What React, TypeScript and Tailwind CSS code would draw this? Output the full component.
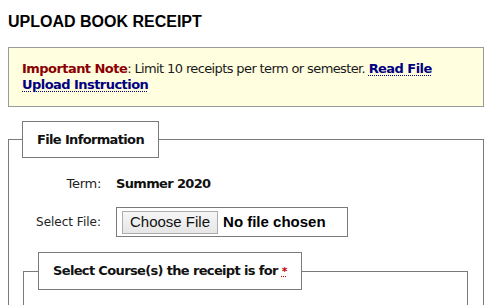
import React from 'react';

const verdana = "font-['DejaVu_Sans',Verdana,sans-serif]";
const arial = "font-['Liberation_Sans',Arial,sans-serif]";

const Legend: React.FC<{ children: React.ReactNode; className?: string }> = ({ children, className }) => (
  <legend
    className={`border border-[#7a7a7a] bg-white px-[14px] py-[10px] text-[13px] leading-[15px] font-bold tracking-[-0.65px] text-[#111] ${verdana} ${className ?? ''}`}
  >
    {children}
  </legend>
);

export default function App() {
  return (
    <div className="min-h-screen bg-white text-[#1a1a1a]">
      <h2 className={`ml-[8px] pt-[13px] text-[16px] leading-[18px] font-bold text-black ${arial}`}>
        UPLOAD BOOK RECEIPT
      </h2>

      {/* note */}
      <div
        className={`mt-[16px] ml-[8px] w-[476px] border border-[#9a9a9a] bg-[#ffffe0] p-[13px] text-[13px] leading-[16px] tracking-[-0.62px] ${verdana}`}
      >
        <span className="font-bold tracking-[-0.55px] text-[#8b0000]">Important Note</span>: Limit 10 receipts per term or semester.{' '}
        <a href="#" className="font-bold tracking-[-0.55px] text-[#000080] underline decoration-dotted decoration-1 underline-offset-2">
          Read File Upload Instruction
        </a>
      </div>

      <fieldset className="mt-[14px] ml-[8px] w-[476px] border border-[#7a7a7a] p-0 pb-[20px]">
        <Legend className="ml-[13px]">File Information</Legend>

        <div className="mt-[18px] grid grid-cols-[92px_1fr] items-center gap-x-[15px] gap-y-[15px]">
          <div className={`text-right text-[13px] leading-[16px] tracking-[-0.3px] text-[#222] ${verdana}`}>Term:</div>
          <div className={`text-[13px] leading-[16px] font-bold tracking-[-0.65px] text-[#111] ${verdana}`}>Summer 2020</div>

          <div className={`text-right text-[12px] leading-[15px] text-[#222] ${verdana}`}>Select File:</div>
          <label className="flex h-[30px] w-[232px] cursor-pointer items-center border border-[#7a7a7a] pl-[5px]">
            <input type="file" className="hidden" />
            <span
              className={`flex h-[23px] items-center border border-[#adadad] bg-gradient-to-b from-[#f6f6f6] to-[#e6e6e6] px-[7px] text-[15px] text-[#111] ${arial}`}
            >
              Choose File
            </span>
            <span className={`ml-[5px] text-[15px] font-bold text-black ${arial}`}>No file chosen</span>
          </label>
        </div>

        <fieldset className="mt-[15px] ml-[14px] w-[445px] border border-[#7a7a7a] p-0 pb-[20px]">
          <Legend className="ml-[14px]">
            Select Course(s) the receipt is for{' '}
            <abbr title="required" className="text-[11px] text-[#c00000] underline decoration-dotted">
              *
            </abbr>
          </Legend>
          <div className="h-[40px]" />
        </fieldset>
      </fieldset>
    </div>
  );
}
